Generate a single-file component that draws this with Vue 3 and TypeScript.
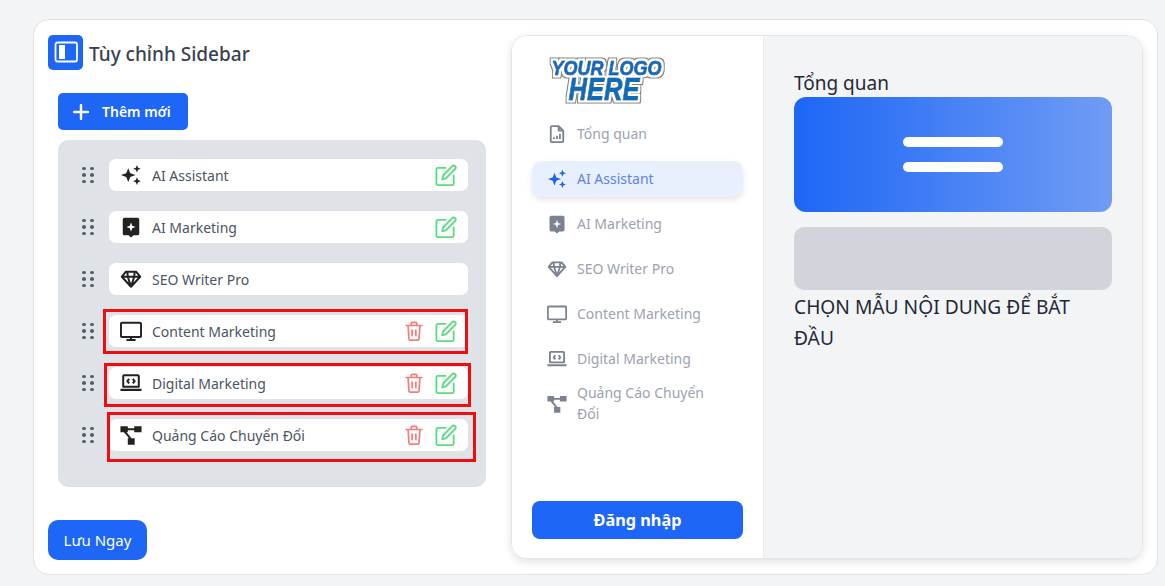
<script setup lang="ts">
type IconPart = { d: string; stroke?: boolean }

const icons: Record<string, IconPart[]> = {
  report: [
    { d: 'M6 2.500h8l5.500 5.500v12a1.800 1.800 0 0 1-1.800 1.800H6.300A1.800 1.800 0 0 1 4.500 20V4.300A1.800 1.800 0 0 1 6 2.500zM14 2.500V8h5.500', stroke: true },
    { d: 'M8.500 18v-2M12 18v-4M15.500 18v-6', stroke: true },
  ],
  sparkles: [
    { d: 'M9 4.500l2.200 5.600 5.800 2-5.800 2L9 19.700l-2.200-5.600-5.800-2 5.800-2z' },
    { d: 'M18.500 1l1.200 3 3 1.200-3 1.200-1.200 3-1.200-3-3-1.200 3-1.200z' },
    { d: 'M18.500 14.500l1.200 3 3 1.200-3 1.200-1.200 3-1.200-3-3-1.200 3-1.200z' },
  ],
  chat: [
    { d: 'M5 2h14a2 2 0 0 1 2 2v15a2 2 0 0 1-2 2h-4.200L12 23.500 9.200 21H5a2 2 0 0 1-2-2V4a2 2 0 0 1 2-2zM12 7l1.300 3.700L17 12l-3.700 1.300L12 17l-1.300-3.700L7 12l3.700-1.300z' },
  ],
  gem: [
    { d: 'M6.500 4h11L22 9.500 12 20.500 2 9.500zM2 9.500h20M8.500 9.500L12 20.500l3.500-11M8 4.500l.5 5M16 4.500l-.5 5', stroke: true },
  ],
  monitor: [
    { d: 'M2.500 3h19a1.500 1.500 0 0 1 1.500 1.500V17a1.500 1.500 0 0 1-1.500 1.500h-19A1.500 1.500 0 0 1 1 17V4.500A1.500 1.500 0 0 1 2.500 3zM12 18v3.500M7 21.800h10', stroke: true },
  ],
  laptop: [
    { d: 'M4.500 3.500h15a1 1 0 0 1 1 1V16h-17V4.500a1 1 0 0 1 1-1zM.5 19.500h23', stroke: true },
    { d: 'M10 7.500L8 10l2 2.500M14 7.500l2 2.500-2 2.500', stroke: true },
  ],
  nodes: [
    { d: 'M.5 2.500h8v6.500h-8zM15.500 2.500h8v6.500h-8zM8.500 15.500h7.500v7h-7.500z' },
    { d: 'M7 5.800h10M5 8l6.500 8', stroke: true },
  ],
}

const rows = [
  { label: 'AI Assistant', icon: 'sparkles', trash: false, edit: true, mark: '' },
  { label: 'AI Marketing', icon: 'chat', trash: false, edit: true, mark: '' },
  { label: 'SEO Writer Pro', icon: 'gem', trash: false, edit: false, mark: '' },
  { label: 'Content Marketing', icon: 'monitor', trash: true, edit: true, mark: 'mark-a' },
  { label: 'Digital Marketing', icon: 'laptop', trash: true, edit: true, mark: 'mark-b' },
  { label: 'Quảng Cáo Chuyển Đổi', icon: 'nodes', trash: true, edit: true, mark: 'mark-c' },
]

const navItems = [
  { label: 'Tổng quan', icon: 'report' },
  { label: 'AI Assistant', icon: 'sparkles', active: true },
  { label: 'AI Marketing', icon: 'chat' },
  { label: 'SEO Writer Pro', icon: 'gem' },
  { label: 'Content Marketing', icon: 'monitor' },
  { label: 'Digital Marketing', icon: 'laptop' },
  { label: 'Quảng Cáo Chuyển Đổi', icon: 'nodes' },
]
</script>

<template>
  <div class="page">
    <div class="card">
      <section class="editor">
        <header class="title">
          <span class="title-icon">
            <svg viewBox="0 0 35 35" width="35" height="35">
              <rect x="7.500" y="7.500" width="21.500" height="19" rx="2" fill="none" stroke="#fff" stroke-width="1.800" />
              <rect x="11" y="10" width="6" height="14" fill="#fff" />
            </svg>
          </span>
          <h1>Tùy chỉnh Sidebar</h1>
        </header>

        <button class="add-btn">
          <svg viewBox="0 0 16 16" width="16" height="16">
            <path d="M8 1v14M1 8h14" stroke="#fff" stroke-width="2.400" stroke-linecap="round" />
          </svg>
          <span>Thêm mới</span>
        </button>

        <div class="panel">
          <div v-for="row in rows" :key="row.label" class="panel-row">
            <div class="grip"><i v-for="n in 6" :key="n" /></div>
            <div class="row">
              <svg class="row-icon" viewBox="0 0 24 24" width="22" height="22">
                <path
                  v-for="(part, i) in icons[row.icon]"
                  :key="i"
                  :d="part.d"
                  fill-rule="evenodd"
                  :class="part.stroke ? 'line' : 'solid'"
                />
              </svg>
              <span class="row-label">{{ row.label }}</span>
              <svg v-if="row.trash" class="trash" viewBox="0 0 24 24" width="22" height="22">
                <path d="M3.500 6h17M9 6V3.500a1 1 0 0 1 1-1h4a1 1 0 0 1 1 1V6M5.500 6l1 14.500a1.500 1.500 0 0 0 1.500 1.500h8a1.500 1.500 0 0 0 1.500-1.500l1-14.500M10 11v6M14 11v6" />
              </svg>
              <svg v-if="row.edit" class="edit" viewBox="0 0 24 24" width="23" height="23">
                <path d="M12 4H4a1.500 1.500 0 0 0-1.500 1.500v15A1.500 1.500 0 0 0 4 22h15a1.500 1.500 0 0 0 1.500-1.500V12" />
                <path d="M19 2.200a2.100 2.100 0 0 1 3 3L12.500 15l-4 1 1-4z" />
              </svg>
              <div v-if="row.mark" class="mark" :class="row.mark" />
            </div>
          </div>
        </div>

        <button class="save-btn">Lưu Ngay</button>
      </section>

      <section class="preview">
        <aside class="side">
          <svg class="logo" viewBox="0 0 120 54" width="120" height="54">
            <defs>
              <filter id="logo-sticker" x="-10%" y="-15%" width="120%" height="130%">
                <feMorphology in="SourceAlpha" operator="dilate" radius="3" result="outer" />
                <feFlood flood-color="#7d7f7c" />
                <feComposite in2="outer" operator="in" result="edge" />
                <feMorphology in="SourceAlpha" operator="dilate" radius="2" result="inner" />
                <feFlood flood-color="#ffffff" />
                <feComposite in2="inner" operator="in" result="halo" />
                <feMerge>
                  <feMergeNode in="edge" />
                  <feMergeNode in="halo" />
                  <feMergeNode in="SourceGraphic" />
                </feMerge>
              </filter>
            </defs>
            <g class="logo-ink" filter="url(#logo-sticker)">
              <text x="59.500" y="20.500" text-anchor="middle" font-size="21" textLength="110" lengthAdjust="spacingAndGlyphs">YOUR LOGO</text>
              <text x="57" y="46" text-anchor="middle" font-size="31" textLength="71" lengthAdjust="spacingAndGlyphs">HERE</text>
            </g>
          </svg>

          <nav class="nav">
            <a v-for="item in navItems" :key="item.label" class="nav-item" :class="{ active: item.active }">
              <svg viewBox="0 0 24 24" width="20" height="20">
                <path
                  v-for="(part, i) in icons[item.icon]"
                  :key="i"
                  :d="part.d"
                  fill-rule="evenodd"
                  :class="part.stroke ? 'line' : 'solid'"
                />
              </svg>
              <span>{{ item.label }}</span>
            </a>
          </nav>

          <button class="login-btn">Đăng nhập</button>
        </aside>

        <main class="content">
          <div class="content-title">Tổng quan</div>
          <div class="hero">
            <i />
            <i />
          </div>
          <div class="placeholder" />
          <p>CHỌN MẪU NỘI DUNG ĐỂ BẮT ĐẦU</p>
        </main>
      </section>
    </div>
  </div>
</template>

<style>
html,
body {
  margin: 0;
  background: #f3f4f6;
}
</style>

<style scoped>
.page {
  box-sizing: border-box;
  width: 1165px;
  height: 586px;
  padding: 19px 7px 11px 33px;
  font-family: "Noto Sans", "Open Sans", sans-serif;
  overflow: hidden;
}
.card {
  box-sizing: border-box;
  height: 556px;
  display: flex;
  justify-content: space-between;
  padding: 15px 14px;
  background: #fff;
  border: 1px solid #e0e2e6;
  border-radius: 16px;
}

.editor {
  width: 440px;
  display: flex;
  flex-direction: column;
  align-items: flex-start;
}
.editor > * {
  flex: none;
}
.title {
  display: flex;
  align-items: center;
  gap: 6px;
  height: 35px;
}
.title-icon {
  width: 35px;
  height: 35px;
  display: flex;
  border-radius: 5px;
  background: #1d66f6;
}
.title h1 {
  margin: 0;
  padding-top: 2px;
  font-size: 19px;
  font-weight: 500;
  color: #374151;
}
.add-btn {
  margin: 23px 0 0 10px;
  width: 130px;
  height: 37px;
  display: flex;
  align-items: center;
  gap: 13px;
  padding: 0 0 0 15px;
  border: 0;
  border-radius: 5px;
  background: #1d66f6;
  color: #fff;
  font-family: inherit;
  font-size: 14px;
  font-weight: 600;
}
.panel {
  box-sizing: border-box;
  margin: 10px 0 0 10px;
  width: 428px;
  height: 347px;
  display: flex;
  flex-direction: column;
  gap: 20px;
  padding: 19px 18px 0 24px;
  border-radius: 10px;
  background: #dfe3e8;
}
.panel-row {
  display: flex;
  align-items: center;
  gap: 16px;
}
.grip {
  width: 11px;
  display: grid;
  grid-template-columns: 3px 3px;
  justify-content: space-between;
  gap: 3px 4px;
}
.grip i {
  width: 4px;
  height: 3.500px;
  border-radius: 50%;
  background: #565d68;
}
.row {
  position: relative;
  flex: 1;
  height: 32px;
  display: flex;
  align-items: center;
  padding: 0 11px 0 11px;
  border-radius: 7px;
  background: #fff;
}
.row-icon {
  flex: none;
  color: #222;
}
.row-label {
  flex: 1;
  margin-left: 10px;
  font-size: 14px;
  color: #4b5563;
}
.solid {
  fill: currentColor;
}
.line {
  fill: none;
  stroke: currentColor;
  stroke-width: 2.200;
  stroke-linejoin: round;
}
.trash,
.edit {
  fill: none;
  stroke-width: 1.900;
  stroke-linecap: round;
  stroke-linejoin: round;
}
.trash {
  margin-right: 9px;
  stroke: #f87c7c;
}
.edit {
  stroke: #5cdc80;
}
.mark {
  position: absolute;
  border: 3px solid #f00d12;
  pointer-events: none;
}
.mark-a {
  inset: -6px 0 -7px -6px;
}
.mark-b {
  inset: -4px -3px -8px -5px;
}
.mark-c {
  inset: -7px -8px -11px -2px;
}
.save-btn {
  margin-top: 33px;
  width: 99px;
  height: 40px;
  border: 0;
  border-radius: 10px;
  background: #1d66f6;
  color: #fff;
  font-family: inherit;
  font-size: 15px;
}

.preview {
  box-sizing: border-box;
  width: 632px;
  height: 524px;
  display: flex;
  overflow: hidden;
  border: 1px solid #e3e5e9;
  border-radius: 16px;
  box-shadow: 0 3px 8px rgba(0, 0, 0, 0.12);
}
.side {
  box-sizing: border-box;
  width: 252px;
  display: flex;
  flex-direction: column;
  padding: 18px 20px 19px 20px;
  background: #fff;
  border-right: 1px solid #e8eaed;
}
.logo {
  margin-left: 15px;
  flex: none;
  overflow: visible;
}
.logo text {
  font-family: "Liberation Sans", sans-serif;
  font-weight: 700;
  font-style: italic;
}
.logo-ink text {
  fill: #0f6cb8;
  stroke: #0f6cb8;
  stroke-width: 1;
  stroke-linejoin: round;
}
.nav {
  margin-top: 8px;
  display: flex;
  flex-direction: column;
  gap: 9px;
}
.nav-item {
  box-sizing: border-box;
  min-height: 36px;
  display: flex;
  align-items: center;
  gap: 10px;
  padding: 0 15px;
  border-radius: 10px;
  font-size: 14px;
  line-height: 21px;
  color: #9ca3af;
}
.nav-item:last-child {
  margin-top: -4px;
}
.nav-item span {
  padding-bottom: 2px;
}
.nav-item svg {
  flex: none;
  color: #7b838f;
}
.nav-item.active {
  background: #e8effd;
  color: #5b85ee;
  box-shadow: 0 3px 6px rgba(0, 0, 0, 0.1);
}
.nav-item.active svg {
  color: #2563eb;
}
.login-btn {
  margin-top: auto;
  height: 38px;
  border: 0;
  border-radius: 8px;
  background: #1d66f6;
  color: #fff;
  font-family: inherit;
  font-size: 16.300px;
  font-weight: 700;
}
.content {
  flex: 1;
  padding: 34px 30px 0 30px;
  background: #f3f4f6;
  color: #1f2937;
}
.content-title {
  height: 27px;
  font-size: 19px;
  line-height: 26px;
}
.hero {
  height: 115px;
  display: flex;
  flex-direction: column;
  align-items: center;
  justify-content: center;
  gap: 15px;
  border-radius: 12px;
  background: linear-gradient(90deg, #1d66f6, #709cf4);
}
.hero i {
  width: 100px;
  height: 10px;
  border-radius: 5px;
  background: #fff;
}
.placeholder {
  margin-top: 15px;
  height: 63px;
  border-radius: 10px;
  background: #d1d5db;
}
.content p {
  margin: 1px 0 0;
  font-size: 19.200px;
  line-height: 31px;
}
</style>
